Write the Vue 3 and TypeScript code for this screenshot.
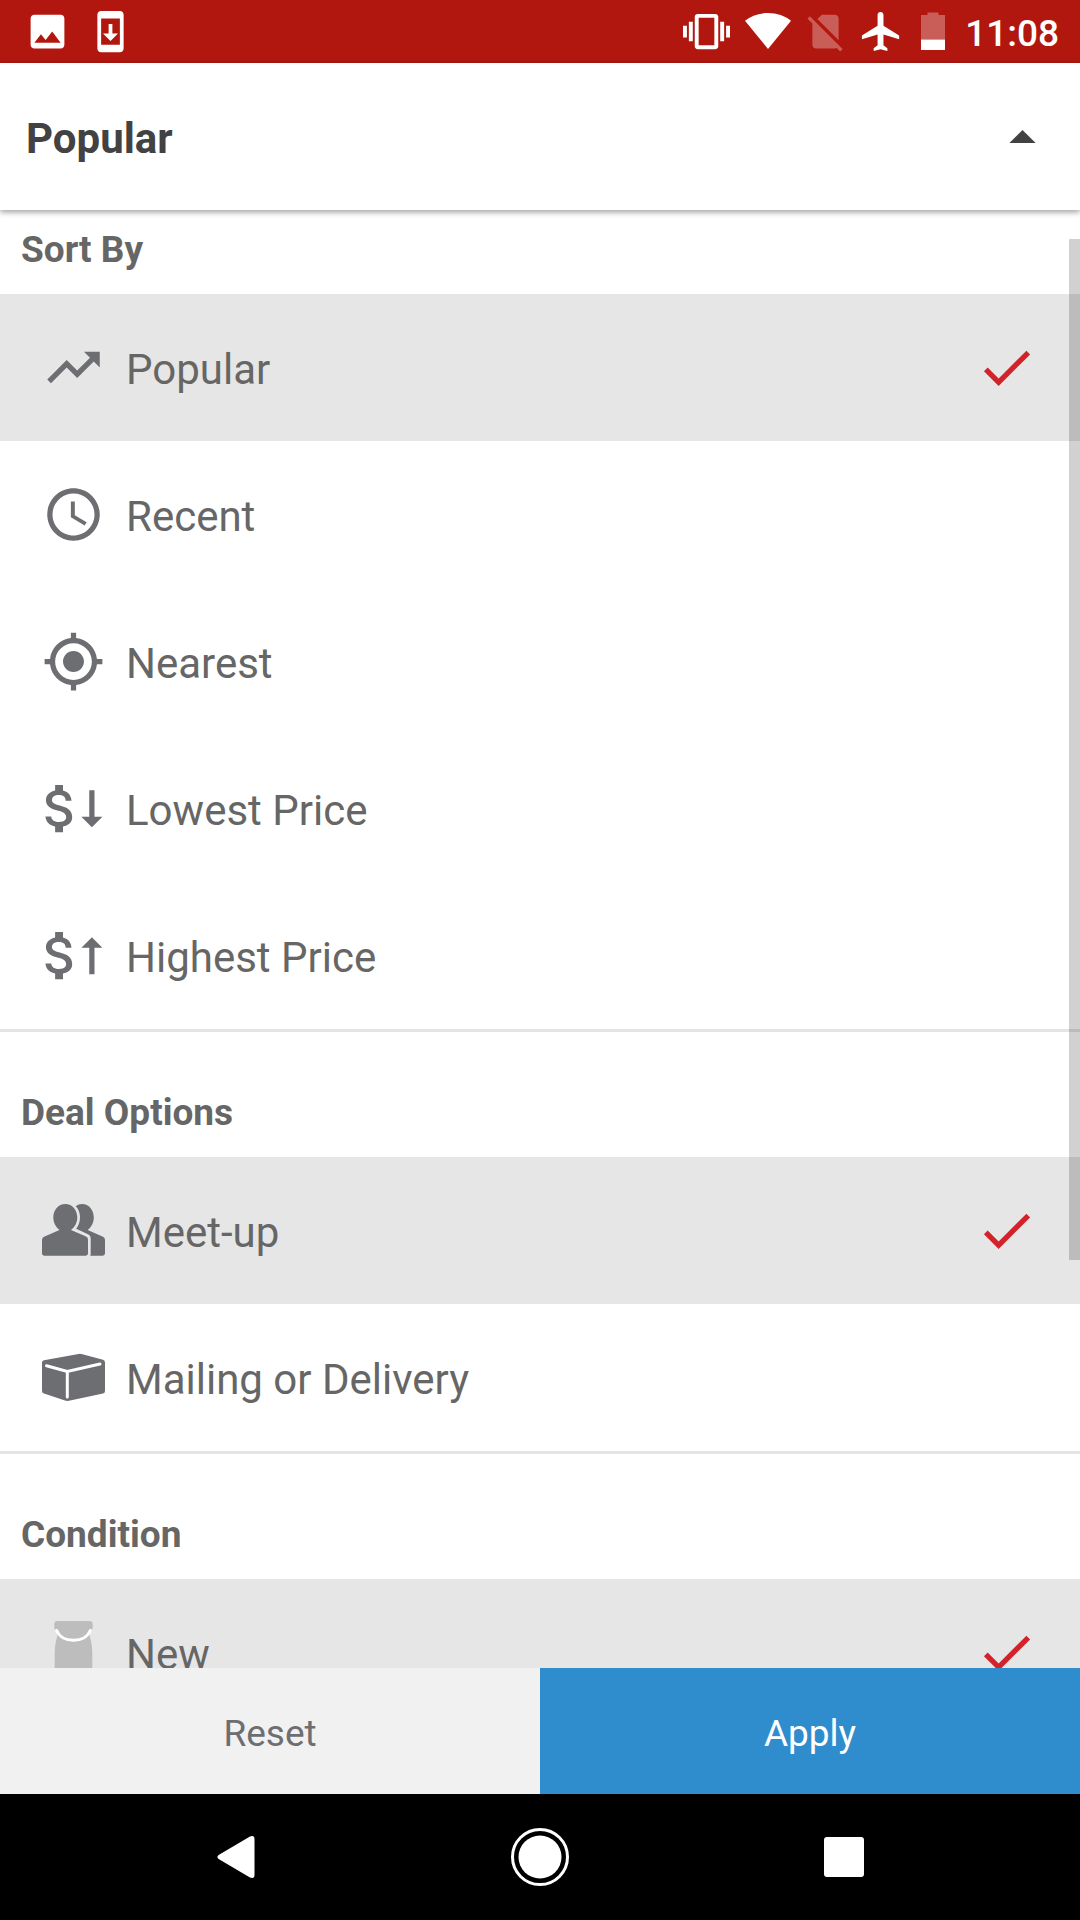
<script setup lang="ts">
import { reactive, ref } from 'vue'

type IconName = 'trending' | 'clock' | 'target' | 'priceDown' | 'priceUp' | 'people' | 'box' | 'bag'

interface Option {
  id: string
  label: string
  icon: IconName
}

interface Section {
  id: string
  title: string
  type: 'radio' | 'checkbox'
  options: Option[]
}

const sections: Section[] = [
  {
    id: 'sort',
    title: 'Sort By',
    type: 'radio',
    options: [
      { id: 'popular', label: 'Popular', icon: 'trending' },
      { id: 'recent', label: 'Recent', icon: 'clock' },
      { id: 'nearest', label: 'Nearest', icon: 'target' },
      { id: 'lowest', label: 'Lowest Price', icon: 'priceDown' },
      { id: 'highest', label: 'Highest Price', icon: 'priceUp' },
    ],
  },
  {
    id: 'deal',
    title: 'Deal Options',
    type: 'checkbox',
    options: [
      { id: 'meetup', label: 'Meet-up', icon: 'people' },
      { id: 'delivery', label: 'Mailing or Delivery', icon: 'box' },
    ],
  },
  {
    id: 'condition',
    title: 'Condition',
    type: 'checkbox',
    options: [{ id: 'new', label: 'New', icon: 'bag' }],
  },
]

const defaults: Record<string, string[]> = { sort: ['popular'], deal: ['meetup'], condition: ['new'] }
const selected = reactive<Record<string, string[]>>({ ...defaults })
const open = ref(true)

function isSelected(section: Section, option: Option): boolean {
  return selected[section.id].includes(option.id)
}

function choose(section: Section, option: Option): void {
  if (section.type === 'radio') {
    selected[section.id] = [option.id]
  } else if (isSelected(section, option)) {
    selected[section.id] = selected[section.id].filter((id) => id !== option.id)
  } else {
    selected[section.id] = [...selected[section.id], option.id]
  }
}

function reset(): void {
  Object.assign(selected, defaults)
}
</script>

<template>
  <div class="screen">
    <div class="status">
      <div class="status-left">
        <svg width="45" height="45" viewBox="0 0 24 24" aria-hidden="true">
          <path d="M21 19V5c0-1.1-.9-2-2-2H5c-1.1 0-2 .9-2 2v14c0 1.1.9 2 2 2h14c1.1 0 2-.9 2-2zM8.500 13.500l2.500 3.010L14.500 12l4.500 6H5l3.500-4.500z" />
        </svg>
        <svg width="45" height="45" viewBox="0 0 24 24" aria-hidden="true">
          <path d="M17 1H7c-1.100 0-2 .9-2 2v18c0 1.100.9 2 2 2h10c1.100 0 2-.9 2-2V3c0-1.100-.9-2-2-2zm0 18H7V5h10v14zm-1-6h-3V8h-2v5H8l4 4 4-4z" />
        </svg>
      </div>
      <div class="status-right">
        <svg width="47" height="47" viewBox="0 0 24 24" aria-hidden="true">
          <path d="M0 15h2V9H0v6zm3 2h2V7H3v10zm19-8v6h2V9h-2zm-3 8h2V7h-2v10zM16.500 3h-9C6.670 3 6 3.670 6 4.500v15c0 .83.67 1.500 1.500 1.500h9c.83 0 1.500-.67 1.500-1.500v-15c0-.83-.67-1.500-1.500-1.500zM16 19H8V5h8v14z" />
        </svg>
        <svg width="56" height="47" viewBox="0 0 56 47" aria-hidden="true">
          <path d="M28 41L5 12.700C11 8 19 5 28 5s17 3 23 7.700z" />
        </svg>
        <svg class="dim" width="42" height="45" viewBox="1.600 0 22.400 24" aria-hidden="true">
          <path d="M18.990 5c0-1.100-.89-2-1.990-2h-7L7.660 5.340 19 16.680 18.990 5zM3.650 3.880L2.380 5.150 5 7.770V19c0 1.100.9 2 2 2h10.010c.35 0 .67-.1.96-.26l1.880 1.880 1.270-1.270L3.650 3.880z" />
        </svg>
        <svg width="47" height="47" viewBox="0 0 24 24" aria-hidden="true">
          <path d="M21 16v-2l-8-5V3.500c0-.83-.67-1.500-1.500-1.500S10 2.670 10 3.500V9l-8 5v2l8-2.500V19l-2 1.500V22l3.500-1 3.500 1v-1.500L13 19v-5.500l8 2.500z" />
        </svg>
        <svg width="40" height="47" viewBox="0 0 40 47" aria-hidden="true">
          <path class="dim" d="M6 7h6.500V4.500h11V7H30v24.500H6z" />
          <path d="M6 31.500h24V42H6z" />
        </svg>
        <time>11:08</time>
      </div>
    </div>

    <button class="header" type="button" :aria-expanded="open" @click="open = !open">
      <span class="text">Popular</span>
      <svg width="63" height="63" viewBox="0 0 24 24" aria-hidden="true">
        <path d="M7 14.500l5-5 5 5z" />
      </svg>
    </button>

    <div class="panel">
      <form class="list">
        <fieldset v-for="section in sections" :key="section.id" class="section">
          <legend class="title">{{ section.title }}</legend>
          <label
            v-for="option in section.options"
            :key="option.id"
            class="row"
            :class="{ active: isSelected(section, option) }"
          >
            <input
              class="control"
              :type="section.type"
              :name="section.id"
              :value="option.id"
              :checked="isSelected(section, option)"
              @change="choose(section, option)"
            />
            <svg v-if="option.icon === 'trending'" class="icon" viewBox="0 0 24 24" aria-hidden="true">
              <path d="M16 6l2.290 2.290-4.880 4.880-4-4L2 16.590 3.410 18l6-6 4 4 6.300-6.290L22 12V6z" />
            </svg>
            <svg v-else-if="option.icon === 'clock'" class="icon" viewBox="0 0 24 24" aria-hidden="true">
              <path d="M11.990 2C6.470 2 2 6.480 2 12s4.470 10 9.990 10C17.520 22 22 17.520 22 12S17.520 2 11.990 2zM12 20c-4.420 0-8-3.580-8-8s3.580-8 8-8 8 3.580 8 8-3.580 8-8 8zm.5-13H11v6l5.250 3.150.75-1.230-4.500-2.670z" />
            </svg>
            <svg v-else-if="option.icon === 'target'" class="icon" viewBox="0 0 24 24" aria-hidden="true">
              <path d="M12 8c-2.210 0-4 1.790-4 4s1.790 4 4 4 4-1.790 4-4-1.790-4-4-4zm8.940 3c-.46-4.170-3.770-7.480-7.940-7.940V1h-2v2.060C6.830 3.520 3.520 6.830 3.060 11H1v2h2.060c.46 4.170 3.770 7.480 7.940 7.940V23h2v-2.060c4.170-.46 7.480-3.770 7.940-7.940H23v-2h-2.060zM12 19c-3.870 0-7-3.130-7-7s3.130-7 7-7 7 3.130 7 7-3.130 7-7 7z" />
            </svg>
            <svg v-else-if="option.icon === 'priceDown' || option.icon === 'priceUp'" class="icon" viewBox="0 0 24 24" aria-hidden="true">
              <path transform="translate(-5 0)" d="M11.800 10.900c-2.270-.59-3-1.200-3-2.150 0-1.090 1.010-1.850 2.700-1.850 1.780 0 2.440.85 2.500 2.100h2.210c-.07-1.720-1.120-3.300-3.210-3.810V3h-3v2.160c-1.940.42-3.500 1.680-3.500 3.610 0 2.310 1.910 3.460 4.700 4.130 2.500.6 3 1.480 3 2.410 0 .69-.49 1.790-2.700 1.790-2.060 0-2.870-.92-2.980-2.100h-2.200c.12 2.190 1.760 3.420 3.680 3.830V21h3v-2.150c1.950-.37 3.500-1.500 3.500-3.550 0-2.840-2.430-3.810-4.700-4.400z" />
              <path v-if="option.icon === 'priceDown'" d="M18 5h2v10.100h3L19 19.100l-4-4h3z" />
              <path v-else d="M18 19.100h2V9h3L19 5l-4 4h3z" />
            </svg>
            <svg v-else-if="option.icon === 'people'" class="icon" viewBox="0 0 63 63" aria-hidden="true">
              <path d="M23.300 5C30.300 5 35.300 11 35.300 18.300C35.300 23.500 33 28.200 29 31L43.500 37.200Q46 38.300 46 40.500V54Q46 56.700 43.300 56.700H2.700Q0 56.700 0 54V41Q0 38.700 2 37.800L17.500 31C13.700 28.200 11.300 23.500 11.300 18.300C11.300 11 16.300 5 23.300 5z" />
              <path d="M33.800 7.200C35.600 5.700 37.700 5 40 5C47 5 51.800 11 51.800 18.300C51.800 23.500 49.500 28.200 45.700 31L61 37.800Q63 38.700 63 41V54Q63 56.700 60.300 56.700H48.200Q48.700 55.700 48.700 54.500V39.500Q48.700 36.700 46.500 35.600L34.200 29.800C36.600 26.800 38 22.800 38 18.300C38 14 36.600 10 33.800 7.200z" />
            </svg>
            <svg v-else-if="option.icon === 'box'" class="icon" viewBox="0 0 63 63" aria-hidden="true">
              <path d="M2 14.200L36.500 7.900Q38 7.600 39.500 7.900L61 13.800Q63 14.400 63 16.500V45Q63 47 61 47.500L27 54.800Q25 55.200 23 54.600L2 47.600Q0 47 0 45V16.500Q0 14.600 2 14.200z" />
              <path class="crease" d="M4.500 19.700L25.300 25.500L58 18M25.300 25.500V51" />
            </svg>
            <svg v-else class="icon pale" viewBox="0 0 63 63" aria-hidden="true">
              <path d="M15.300 0H47.700Q50.700 0 50.700 3V6.500Q50.700 9.300 47.700 9.300L47.500 14C49.500 21 50.300 26 50.300 33V63H12.700V33C12.700 26 13.500 21 15.500 14L15.300 9.300Q12.300 9.300 12.300 6.500V3Q12.300 0 15.300 0z" />
              <path class="crease" d="M14.700 9.500C17 15.500 23.500 19.200 31.500 19.200S46 15.500 48.300 9.500" />
            </svg>
            <span class="text">{{ option.label }}</span>
            <svg v-if="isSelected(section, option)" class="check" viewBox="0 0 24 24" aria-hidden="true">
              <path d="M9 16.170L4.830 12l-1.420 1.410L9 19 21 7l-1.410-1.410z" />
            </svg>
          </label>
        </fieldset>
      </form>
      <div class="thumb"></div>
    </div>

    <div class="actions">
      <button class="reset" type="button" @click="reset"><span class="text">Reset</span></button>
      <button class="apply" type="button"><span class="text">Apply</span></button>
    </div>

    <nav class="nav">
      <button type="button" aria-label="Back">
        <svg width="60" height="60" viewBox="0 0 60 60" aria-hidden="true">
          <path d="M12.600 28L44 9.500Q48.500 8 48.500 12V48Q48.500 52 44 50.500L12.600 32Q10.200 30 12.600 28z" />
        </svg>
      </button>
      <button type="button" aria-label="Home">
        <svg width="60" height="60" viewBox="0 0 60 60" aria-hidden="true">
          <circle cx="30" cy="30" r="21.500" />
          <circle class="ring" cx="30" cy="30" r="27.500" />
        </svg>
      </button>
      <button type="button" aria-label="Recent apps">
        <svg width="60" height="60" viewBox="0 0 60 60" aria-hidden="true">
          <rect x="10" y="10" width="40" height="40" rx="3" />
        </svg>
      </button>
    </nav>
  </div>
</template>

<style>
body {
  margin: 0;
}
</style>

<style scoped>
.screen {
  display: flex;
  flex-direction: column;
  height: 100vh;
  overflow: hidden;
  background: #fff;
  color: #666;
  font-family: Roboto, 'Liberation Sans', sans-serif;
  font-size: 42px;
}

svg {
  display: block;
  flex: none;
}

button {
  border: 0;
  margin: 0;
  padding: 0;
  font: inherit;
  color: inherit;
  cursor: pointer;
}

.text {
  padding-top: 4px;
}

.status {
  display: flex;
  flex: none;
  align-items: center;
  justify-content: space-between;
  height: 63px;
  padding: 0 21px 0 25px;
  background: #b2170f;
  color: #fff;
  fill: #fff;
}

.status-left {
  display: flex;
  gap: 18px;
}

.status-right {
  display: flex;
  align-items: center;
  gap: 10px;
}

.status time {
  padding-top: 4px;
  font-size: 37px;
  font-weight: 500;
}

.dim {
  opacity: 0.3;
}

.header {
  position: relative;
  z-index: 1;
  display: flex;
  flex: none;
  align-items: center;
  justify-content: space-between;
  height: 147px;
  padding: 0 26px;
  background: #fff;
  box-shadow: 0 2px 6px rgba(0, 0, 0, 0.4);
  color: #424242;
  fill: #424242;
  font-weight: 700;
}

.panel {
  position: relative;
  flex: 1;
  min-height: 0;
}

.list {
  height: 100%;
  overflow-y: auto;
  scrollbar-width: none;
}

.thumb {
  position: absolute;
  top: 2%;
  right: 0;
  width: 11px;
  height: 70%;
  background: rgba(0, 0, 0, 0.18);
  pointer-events: none;
}

.section {
  min-width: 0;
  margin: 0;
  padding: 0;
  border: 0;
}

.section + .section {
  border-top: 3px solid #e4e4e4;
}

.title {
  display: block;
  float: left;
  width: 100%;
  box-sizing: border-box;
  padding: 59px 21px 22px;
  font-size: 37px;
  font-weight: 700;
  line-height: 44px;
}

.section:first-child .title {
  padding-top: 18px;
}

.row {
  position: relative;
  display: flex;
  clear: both;
  align-items: center;
  gap: 21px;
  height: 147px;
  padding: 0 42px;
  cursor: pointer;
}

.row.active {
  background: #e6e6e6;
}

.row .text {
  flex: 1;
}

.control {
  position: absolute;
  inset: 0;
  width: 100%;
  height: 100%;
  margin: 0;
  opacity: 0;
}

.icon,
.check {
  width: 63px;
  height: 63px;
}

.icon {
  fill: #6d6e71;
}

.icon.pale {
  fill: #bdbdbd;
}

.icon .crease {
  fill: none;
  stroke: #fff;
  stroke-width: 3;
  stroke-linecap: round;
}

.check {
  fill: #d2232a;
}

.actions {
  display: flex;
  flex: none;
  height: 126px;
  font-size: 37px;
}

.actions button {
  display: flex;
  flex: 1;
  align-items: center;
  justify-content: center;
}

.actions .reset {
  background: #f1f1f1;
  color: #6d6e71;
}

.actions .apply {
  background: #2f8ccd;
  color: #fff;
}

.nav {
  display: flex;
  flex: none;
  height: 126px;
  padding: 0 84px;
  background: #000;
}

.nav button {
  display: flex;
  flex: 1;
  align-items: center;
  justify-content: center;
  background: transparent;
  fill: #fff;
}

.ring {
  fill: none;
  stroke: #fff;
  stroke-width: 3;
}
</style>
